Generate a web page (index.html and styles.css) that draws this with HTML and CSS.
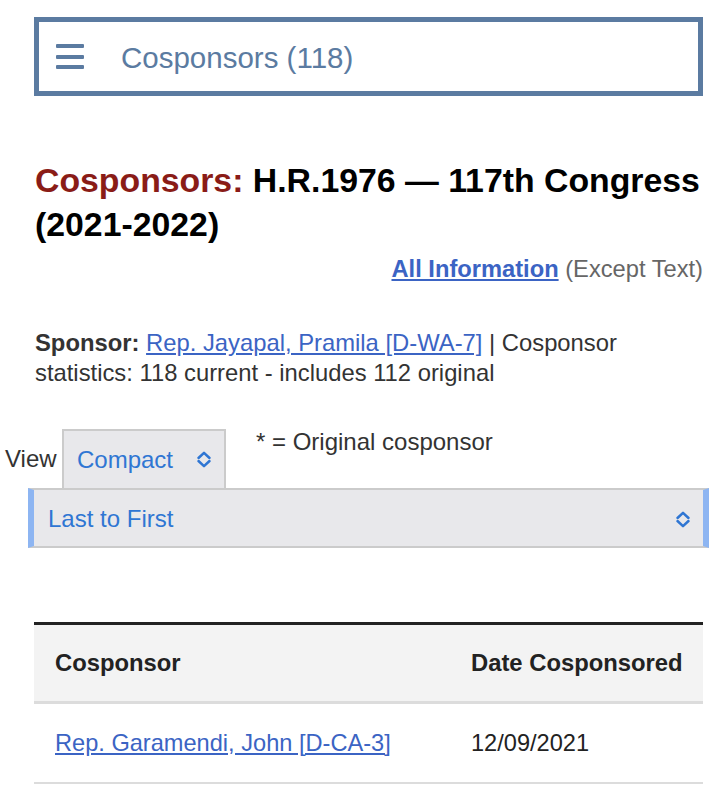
FILE: index.html
```html
<!DOCTYPE html>
<html lang="en">
<head>
<meta charset="utf-8">
<title>Cosponsors - H.R.1976</title>
<link rel="stylesheet" href="styles.css">
</head>
<body>
<div class="page">
  <nav class="nav">
    <span class="burger"><span></span><span></span><span></span></span>
    <span class="nav-title">Cosponsors (118)</span>
  </nav>

  <h1 class="title"><span class="title-red">Cosponsors:</span> H.R.1976 — 117th Congress (2021-2022)</h1>

  <p class="allinfo"><a href="#" class="link-bold">All Information</a> <span class="muted">(Except Text)</span></p>

  <p class="sponsor"><strong>Sponsor:</strong> <a href="#" class="link">Rep. Jayapal, Pramila [D-WA-7]</a> | Cosponsor statistics: 118 current - includes 112 original</p>

  <div class="view-row">
    <span class="view-label">View</span>
    <div class="select select-compact">
      <span class="select-text">Compact</span>
      <svg class="chev" width="16" height="17" viewBox="0 0 16 17"><path d="M2.5 7 L8 1.8 L13.5 7 M2.5 10 L8 15.2 L13.5 10" fill="none" stroke="#2f76d3" stroke-width="2.5" stroke-linecap="round" stroke-linejoin="round"/></svg>
    </div>
    <span class="note">* = Original cosponsor</span>
  </div>

  <div class="select select-sort">
    <span class="select-text">Last to First</span>
    <svg class="chev" width="16" height="17" viewBox="0 0 16 17"><path d="M2.5 7 L8 1.8 L13.5 7 M2.5 10 L8 15.2 L13.5 10" fill="none" stroke="#2f76d3" stroke-width="2.5" stroke-linecap="round" stroke-linejoin="round"/></svg>
  </div>

  <table class="cos-table">
    <colgroup><col class="col-a"><col class="col-b"></colgroup>
    <thead>
      <tr><th>Cosponsor</th><th>Date Cosponsored</th></tr>
    </thead>
    <tbody>
      <tr><td><a href="#" class="link">Rep. Garamendi, John [D-CA-3]</a></td><td>12/09/2021</td></tr>
    </tbody>
  </table>
</div>
</body>
</html>
```

FILE: styles.css
```css
html, body {
  margin: 0;
  padding: 0;
  background: #fff;
}
body {
  font-family: "Liberation Sans", Arial, Helvetica, sans-serif;
  font-size: 24px;
  color: #333;
}
.page {
  padding: 17px 14px 0 34px;
}
.nav {
  box-sizing: border-box;
  height: 79px;
  border: 5px solid #5b7ba1;
  display: flex;
  align-items: center;
  padding-left: 17px;
  gap: 37px;
}
.burger {
  display: flex;
  flex-direction: column;
  gap: 6.3px;
  width: 28px;
}
.burger span {
  display: block;
  height: 4px;
  background: #5b7ba1;
  border-radius: 1px;
}
.nav-title {
  font-size: 29.5px;
  color: #5b7ba1;
  line-height: 1;
  margin-top: 3px;
}
.title {
  margin: 62px 0 0;
  font-size: 33.8px;
  line-height: 44px;
  font-weight: bold;
  color: #000;
  margin-left: 1px;
}
.title-red {
  color: #8a1c17;
}
.allinfo {
  margin: 8px 0 0;
  text-align: right;
  line-height: 30px;
  font-size: 23.7px;
}
.link-bold {
  color: #3b64c4;
  font-weight: bold;
  text-decoration: underline;
  text-underline-offset: 2px;
}
.link {
  color: #3b64c4;
  text-decoration: underline;
  text-underline-offset: 2px;
}
.muted {
  color: #666;
}
.sponsor {
  margin: 44px 0 0;
  line-height: 30px;
  font-size: 23.8px;
  margin-left: 1px;
}
.sponsor strong {
  font-weight: bold;
}
.view-row {
  margin: 41px 0 0 -29px;
  display: flex;
  align-items: flex-start;
}
.view-label {
  align-self: center;
  width: 57px;
  line-height: 30px;
}
.select {
  box-sizing: border-box;
  background: #e8e8eb;
  display: flex;
  align-items: center;
  justify-content: space-between;
  color: #2f76d3;
}
.select-text {
  line-height: 30px;
}
.select-compact {
  width: 164px;
  height: 59px;
  border: 2px solid #cbcbcb;
  border-bottom: none;
  padding: 0 12px 0 13px;
}
.note {
  margin-left: 30px;
  line-height: 30px;
  margin-top: -2px;
}
.select-sort {
  height: 60px;
  margin: 0 -6px;
  border-left: 6px solid #8db5f2;
  border-right: 6px solid #8db5f2;
  border-top: 2px solid #cbcbcb;
  border-bottom: 2px solid #cbcbcb;
  padding: 2px 12px 0 14px;
}
.chev {
  display: block;
}
.cos-table {
  margin-top: 74px;
  width: 100%;
  border-collapse: collapse;
  table-layout: fixed;
}
.col-a {
  width: 416px;
}
.cos-table th {
  text-align: left;
  font-weight: bold;
  color: #222;
  background: #f3f3f3;
  border-top: 3px solid #222;
  border-bottom: 3px solid #dcdcdc;
  height: 76px;
  padding: 0 0 0 21px;
  font-size: 23.8px;
}
.cos-table td {
  height: 78px;
  padding: 0 0 0 21px;
  border-bottom: 2px solid #dcdcdc;
  color: #222;
  font-size: 23.6px;
}
```
